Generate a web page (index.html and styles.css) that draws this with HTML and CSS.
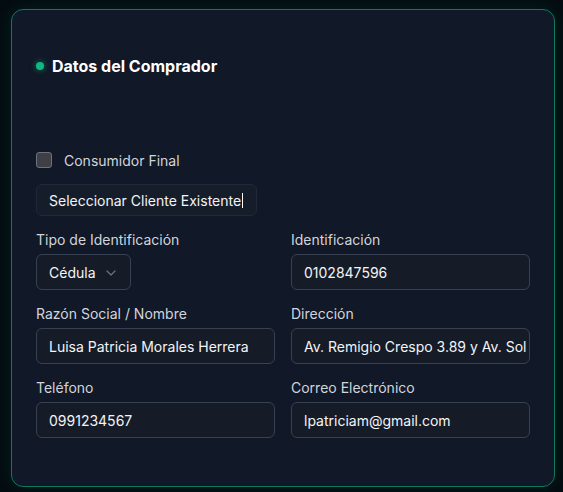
FILE: index.html
```html
<!DOCTYPE html>
<html lang="es">
<head>
<meta charset="utf-8">
<link rel="stylesheet" href="styles.css">
</head>
<body>
<div class="card">
  <div class="header">
    <span class="dot"></span>
    <h2 class="title">Datos del Comprador</h2>
  </div>
  <label class="check">
    <span class="box"></span>
    <span>Consumidor Final</span>
  </label>
  <div class="picker"><span class="caret">Seleccionar Cliente Existente</span></div>
  <div class="grid">
    <div class="field">
      <div class="label">Tipo de Identificación</div>
      <div class="select">
        <span>Cédula</span>
        <svg class="chev" width="10" height="6" viewBox="0 0 10 6"><path d="M1 1l4 4 4-4" fill="none" stroke="#6b7280" stroke-width="1.2" stroke-linecap="round" stroke-linejoin="round"/></svg>
      </div>
    </div>
    <div class="field">
      <div class="label">Identificación</div>
      <div class="input">0102847596</div>
    </div>
    <div class="field">
      <div class="label">Razón Social / Nombre</div>
      <div class="input">Luisa Patricia Morales Herrera</div>
    </div>
    <div class="field">
      <div class="label">Dirección</div>
      <div class="input">Av. Remigio Crespo 3.89 y Av. Sol</div>
    </div>
    <div class="field">
      <div class="label">Teléfono</div>
      <div class="input">0991234567</div>
    </div>
    <div class="field">
      <div class="label">Correo Electrónico</div>
      <div class="input">lpatriciam@gmail.com</div>
    </div>
  </div>
</div>
</body>
</html>
```

FILE: styles.css
```css
* { box-sizing: border-box; }
html, body { margin: 0; }
body {
  background: #040c11;
  padding: 9px 8px 5px 11px;
  font-family: Inter, "Noto Sans", sans-serif;
  height: 492px;
  overflow: hidden;
}
.card {
  height: 478px;
  border: 1px solid #0e7a5a;
  border-radius: 12px;
  background: #111827;
  box-shadow: 0 0 18px rgba(16, 185, 129, 0.12);
  padding: 44px 24px 24px;
}
.header {
  display: flex;
  align-items: center;
  gap: 8px;
  height: 24px;
}
.dot {
  width: 8px;
  height: 8px;
  border-radius: 50%;
  background: #10b981;
  box-shadow: 0 0 6px rgba(16, 185, 129, 0.6);
}
.title {
  margin: 0;
  font-size: 16px;
  line-height: 24px;
  font-weight: 700;
  color: #ffffff;
}
.check {
  display: flex;
  align-items: center;
  gap: 12px;
  margin-top: 72px;
  height: 20px;
  font-size: 14px;
  color: #d1d5db;
}
.box {
  width: 16px;
  height: 16px;
  border-radius: 3px;
  background: #3f3f46;
  border: 1px solid #6b7280;
}
.picker {
  display: inline-flex;
  align-items: center;
  margin-top: 14px;
  height: 32px;
  padding: 0 13px 0 12px;
  border: 1px solid #1f2937;
  border-radius: 6px;
  background: #151d2a;
  font-size: 14px;
  color: #f3f4f6;
}
.caret {
  border-right: 1px solid #ffffff;
  padding-right: 1px;
  line-height: 15px;
}
.grid {
  display: grid;
  grid-template-columns: minmax(0, 1fr) minmax(0, 1fr);
  column-gap: 16px;
  row-gap: 14px;
  margin-top: 14px;
}
.label {
  font-size: 14px;
  line-height: 20px;
  color: #d1d5db;
  margin-bottom: 4px;
}
.input, .select {
  height: 36px;
  display: flex;
  align-items: center;
  padding: 0 12px;
  border: 1px solid #374151;
  border-radius: 6px;
  background: #151c28;
  font-size: 14px;
  color: #f3f4f6;
  white-space: nowrap;
  overflow: hidden;
}
.select {
  width: 95px;
  gap: 10px;
}
.chev { flex: none; margin-top: 1px; }
```
